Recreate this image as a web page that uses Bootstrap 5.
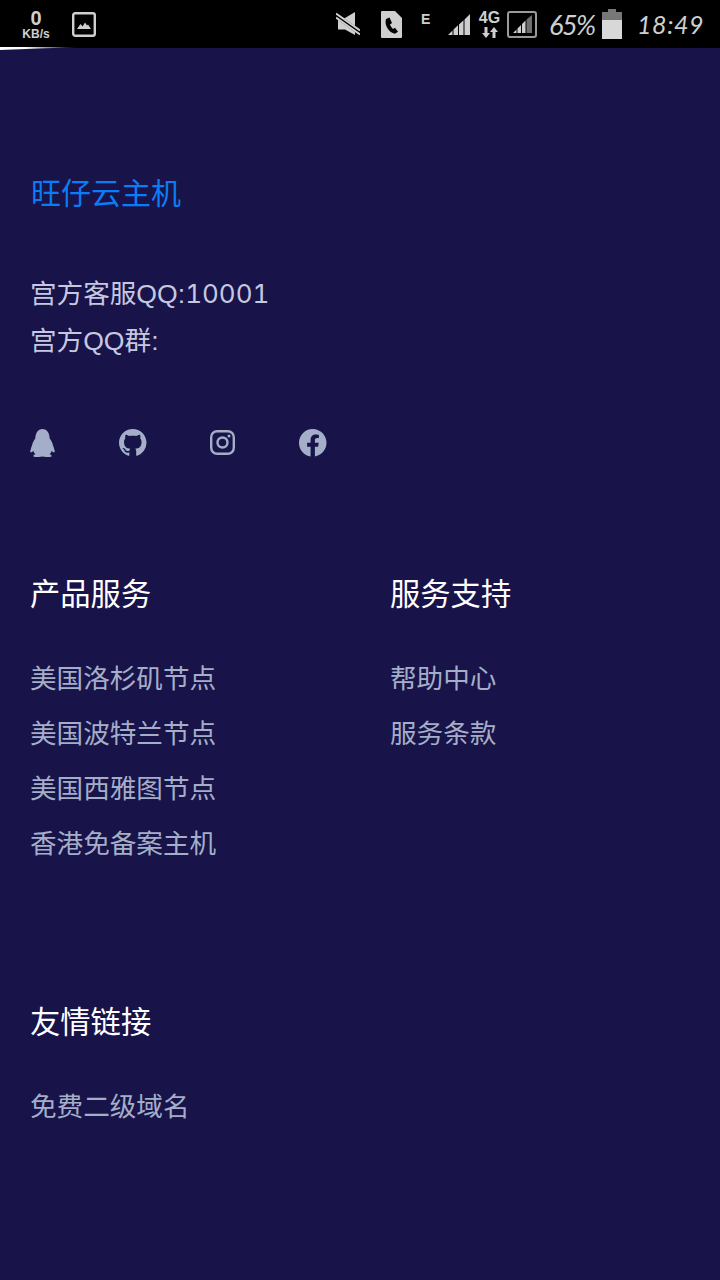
<!DOCTYPE html>
<html lang="zh-CN">
<head>
  <meta charset="UTF-8">
  <title>旺仔云主机</title>
  <meta name="viewport" content="width=device-width, initial-scale=1">
  <link href="https://cdn.jsdelivr.net/npm/bootstrap@5.3.3/dist/css/bootstrap.min.css" rel="stylesheet">
  <style>
    body { background: #181349; font-family: "Liberation Sans", "Noto Sans CJK SC", sans-serif; min-height: 1280px; }
    a { text-decoration: none; }

    /* phone status bar */
    .status-bar { height: 48px; background: #000; color: #cfcfcf; position: relative; }
    .status-bar svg { display: block; flex: none; }
    .load-strip { position: absolute; left: 0; top: 47px; width: 80px; height: 3px; background: linear-gradient(90deg, #fff 30%, rgba(255,255,255,0)); clip-path: polygon(0 0, 100% 0, 0 100%); }
    .net-speed { width: 30px; margin-left: 21px; text-align: center; font-weight: 700; line-height: 1; }
    .net-num { font-size: 20px; height: 19px; }
    .net-unit { font-size: 12px; margin-top: 1px; }
    .pic-icon { margin-left: 21px; }
    .sim-icon { margin-left: 21px; }
    .tiny-e { font-size: 14px; font-weight: 700; line-height: 1; align-self: flex-start; margin: 3px 0 0 19px; width: 10px; }
    .signal-icon { margin-left: 17px; }
    .four-g { width: 23px; margin-left: 8px; font-size: 16px; font-weight: 700; line-height: 1; text-align: center; }
    .four-g svg { margin-top: 1px; }
    .frame-icon { margin-left: 6px; }
    .hand { font-family: "Lato", sans-serif; font-style: italic; font-weight: 400; line-height: 1; white-space: nowrap; }
    .batt-pct { width: 45px; margin-left: 12px; font-size: 27px; letter-spacing: -1.5px; }
    .batt-icon { margin-left: 8px; }
    .clock { width: 67px; margin-left: 15px; margin-right: 16px; font-size: 25px; letter-spacing: .6px; }

    /* footer content */
    .foot-brand { font-size: 30px; line-height: 45px; font-weight: 400; color: #0a7cf5; margin: 0; padding: 123px 31px 0; }
    .foot-brand a { color: inherit; }
    .foot-contact { font-size: 26.6px; line-height: 47px; color: #c6c8e0; margin: 54px 0 0; padding: 0 30px; }
    .contact-num { font-family: "Inter", sans-serif; font-weight: 400; font-size: 26px; font-feature-settings: "tnum"; }
    .foot-social { margin-top: 64px; padding-left: 30px; height: 28px; }
    .social-slot { width: 90px; display: block; }
    .social-slot svg { display: block; }
    .nudge-left { margin-left: -1px; }
    .nudge-down { margin-top: 1px; }
    .foot-head { font-size: 30.3px; line-height: 45px; font-weight: 400; color: #fff; margin: 0 0 42px; }
    .foot-link { display: block; font-size: 26.6px; line-height: 40px; margin-bottom: 15px; color: #a4aec8; }
    .foot-cols { margin-top: 115px; }
    .foot-col { padding: 0 30px; }
    .foot-friends { margin-top: 121px; padding: 0 30px; }
  </style>
</head>
<body>

  <div class="status-bar d-flex align-items-center">
    <div class="load-strip"></div>
    <div class="net-speed">
      <div class="net-num">0</div>
      <div class="net-unit">KB/s</div>
    </div>
    <svg class="pic-icon" width="24" height="25" viewBox="0 0 24 25">
      <rect x="1.200" y="1.200" width="21.600" height="22.600" rx="2" fill="none" stroke="#cfcfcf" stroke-width="2.400"/>
      <path d="M5 17l3.600-5 2 2.600 2.400-4 2 3 1-1.200L19 17z" fill="#cfcfcf"/>
    </svg>

    <div class="ms-auto d-flex align-items-center">
      <svg width="24" height="24" viewBox="0 0 24 24">
        <path d="M2 6h7l10-6v23l-10-5.500H2z" fill="#cfcfcf"/>
        <path d="M0 3.500l24 17" stroke="#000" stroke-width="5" fill="none"/>
        <path d="M0 1.500l24 17M0 5.500l24 17" stroke="#cfcfcf" stroke-width="2" fill="none"/>
      </svg>
      <svg class="sim-icon" width="21" height="27" viewBox="0 0 21 27">
        <path d="M1 0h13l7 7v19a1 1 0 0 1-1 1H1a1 1 0 0 1-1-1V1a1 1 0 0 1 1-1z" fill="#cfcfcf"/>
        <path d="M5 8l3.500-1.500L11 12l-2 1.500c.8 2 1.800 3.400 3 4.500l2-1.300 3 4-3 2C8 22 3 14 5 8z" fill="#000"/>
      </svg>
      <div class="tiny-e">E</div>
      <svg class="signal-icon" width="22" height="21" viewBox="0 0 22 21">
        <path d="M0 21l4.500-4.500V21zM5.500 15.500L10 11.200V21H5.500zM11 10.500l4.500-4.300V21H11zM16.500 5.500L22 0v21h-5.500z" fill="#cfcfcf"/>
      </svg>
      <div class="four-g">
        4G
        <svg class="mx-auto" width="18" height="11" viewBox="0 0 18 11"><path d="M3.500 0h3v6H9l-4 5-4-5h2.500zM11.500 11h3V5H17l-4-5-4 5h2.500z" fill="#cfcfcf"/></svg>
      </div>
      <svg class="frame-icon" width="30" height="27" viewBox="0 0 30 27">
        <rect x="1" y="1" width="28" height="25" rx="2" fill="none" stroke="#9a9a9a" stroke-width="2"/>
        <path d="M6 22l3.500-3.500V22zM10.500 17.500l3.500-3.500v8h-3.500zM15 13l3.500-3.500V22H15z" fill="#cfcfcf"/>
        <path d="M19.500 8.500L25 4v18h-5.500z" fill="#6f6f6f"/>
      </svg>
      <div class="hand batt-pct">65%</div>
      <svg class="batt-icon" width="20" height="30" viewBox="0 0 20 30">
        <path d="M6 0h8v3h6v8H0V3h6z" fill="#777"/>
        <path d="M0 11h20v19H0z" fill="#d8d8d8"/>
      </svg>
      <div class="hand clock">18:49</div>
    </div>
  </div>

  <footer>
    <h2 class="foot-brand"><a href="#">旺仔云主机</a></h2>
    <p class="foot-contact">宫方客服QQ:<span class="contact-num">10001</span><br>宫方QQ群:</p>

    <div class="foot-social d-flex">
      <a class="social-slot" href="#">
        <svg width="25" height="28" viewBox="0 0 25 28">
          <path d="M12.500 0C8 0 5.500 4 5.300 9.500 3.800 11.500 2.500 13.800 2 16.500 1 19 .2 21.500.2 23c.8.800 2 .2 3-1.200.4 1.400 1.200 2.500 2.300 3.400C3.800 25.800 3 26.500 3.500 27.400c2.500 1 6.500.6 9 .2 2.500.4 6.500.8 9-.2.500-.9-.3-1.600-2-2.200 1.100-.9 1.900-2 2.300-3.400 1 1.400 2.200 2 3 1.200 0-1.500-.8-4-1.800-6.500-.5-2.700-1.800-5-3.300-7C19.500 4 17 0 12.500 0z" fill="#a4aec8"/>
        </svg>
      </a>
      <a class="social-slot" href="#">
        <svg class="nudge-left" width="27.500" height="27.500" viewBox="0 0 16 16">
          <path d="M8 0C3.580 0 0 3.580 0 8c0 3.540 2.290 6.530 5.470 7.590.4.070.55-.17.55-.38 0-.19-.01-.82-.01-1.490-2.010.37-2.530-.49-2.690-.94-.09-.23-.48-.94-.82-1.130-.28-.15-.68-.52-.01-.53.63-.01 1.080.58 1.230.82.720 1.210 1.870.87 2.330.66.070-.52.280-.87.510-1.070-1.780-.2-3.640-.89-3.640-3.950 0-.87.310-1.590.820-2.150-.08-.2-.36-1.020.08-2.120 0 0 .67-.21 2.200.82.640-.18 1.320-.27 2-.27.680 0 1.360.09 2 .27 1.530-1.040 2.200-.82 2.200-.82.440 1.100.160 1.920.080 2.120.510.560.820 1.270.820 2.150 0 3.070-1.870 3.750-3.650 3.950.290.250.540.730.540 1.480 0 1.070-.01 1.930-.01 2.200 0 .210.150.460.550.380A8.012 8.012 0 0 0 16 8c0-4.420-3.580-8-8-8z" fill="#a4aec8"/>
        </svg>
      </a>
      <a class="social-slot" href="#">
        <svg class="nudge-down" width="25" height="25" viewBox="0 0 25 25">
          <rect x="1.200" y="1.200" width="22.600" height="22.600" rx="6" fill="none" stroke="#a4aec8" stroke-width="2.400"/>
          <circle cx="12.500" cy="12.500" r="5" fill="none" stroke="#a4aec8" stroke-width="2.400"/>
          <circle cx="19" cy="6" r="1.500" fill="#a4aec8"/>
        </svg>
      </a>
      <a class="social-slot" href="#">
        <svg class="nudge-left" width="27.500" height="27.500" viewBox="0 0 16 16">
          <path d="M16 8.049c0-4.446-3.582-8.050-8-8.050C3.580 0-.002 3.603-.002 8.050c0 4.017 2.926 7.347 6.750 7.951v-5.625h-2.030V8.050H6.750V6.275c0-2.017 1.195-3.131 3.022-3.131.876 0 1.791.157 1.791.157v1.980h-1.009c-.993 0-1.303.621-1.303 1.258v1.510h2.218l-.354 2.326H9.250V16c3.824-.604 6.750-3.934 6.750-7.951z" fill="#a4aec8"/>
        </svg>
      </a>
    </div>

    <div class="foot-cols row g-0">
      <div class="col-6 foot-col">
        <h3 class="foot-head">产品服务</h3>
        <a class="foot-link" href="#">美国洛杉矶节点</a>
        <a class="foot-link" href="#">美国波特兰节点</a>
        <a class="foot-link" href="#">美国西雅图节点</a>
        <a class="foot-link" href="#">香港免备案主机</a>
      </div>
      <div class="col-6 foot-col">
        <h3 class="foot-head">服务支持</h3>
        <a class="foot-link" href="#">帮助中心</a>
        <a class="foot-link" href="#">服务条款</a>
      </div>
    </div>

    <div class="foot-friends">
      <h3 class="foot-head">友情链接</h3>
      <a class="foot-link" href="#">免费二级域名</a>
    </div>
  </footer>

</body>
</html>
